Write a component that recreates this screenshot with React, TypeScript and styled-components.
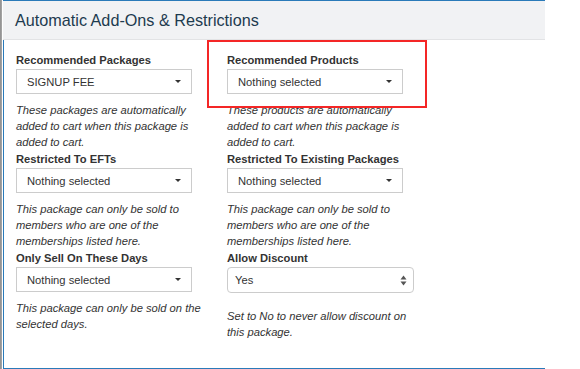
import styled, { createGlobalStyle } from "styled-components"

const GlobalStyle = createGlobalStyle`
  html, body {
    margin: 0;
    padding: 0;
    background: #fff;
  }
  body {
    font-family: "Liberation Sans", Arial, Helvetica, sans-serif;
    color: #333;
  }
`

const Page = styled.div`
  display: flex;
  width: 580px;
  height: 369px;
  overflow: hidden;
  background: #fff;
`

const WindowEdge = styled.div`
  width: 2px;
  flex: none;
  background: linear-gradient(to right, #8e8e8e, #a9a9a9);
`

const Panel = styled.section`
  position: relative;
  width: 542px;
  margin-left: 1px;
  display: flex;
  flex-direction: column;
  border-top: 1px solid #2a7ab9;
`

const Header = styled.header`
  height: 38px;
  display: flex;
  align-items: center;
  padding: 0 12px;
  background: #f1f2f4;
  border-bottom: 1px solid #e2e3e5;
`

const Title = styled.h3`
  margin: 0;
  font-size: 16.2px;
  font-weight: 400;
  color: #1d3b4f;
`

const Body = styled.div`
  flex: 1;
  padding: 12px 12px 0 12px;
  border-left: 1px solid #2a7ab9;
  border-bottom: 1px solid #2a7ab9;
`

const FieldGrid = styled.div`
  display: grid;
  grid-template-columns: 187px 187px;
  column-gap: 24px;
`

const FormGroup = styled.div`
  display: flex;
  flex-direction: column;
  align-items: flex-start;
`

const Label = styled.label`
  font-size: 11.2px;
  line-height: 16px;
  font-weight: 700;
  color: #333;
  margin-bottom: 1px;
`

const PickerButton = styled.div`
  box-sizing: border-box;
  width: 176px;
  height: 25px;
  display: flex;
  align-items: center;
  justify-content: space-between;
  padding: 0 10px;
  border: 1px solid #cccccc;
  background: #fff;
  font-size: 11.2px;
  color: #333;
`

const Caret = styled.span`
  width: 0;
  height: 0;
  margin-right: 0;
  border-top: 3px solid #333;
  border-left: 3px solid transparent;
  border-right: 3px solid transparent;
`

const NativeSelect = styled.div`
  box-sizing: border-box;
  width: 187px;
  height: 26px;
  display: flex;
  align-items: center;
  justify-content: space-between;
  padding: 0 6px 0 7px;
  border: 1px solid #cccccc;
  border-radius: 4px;
  background: #fff;
  font-size: 11.2px;
  color: #333;
`

const Help = styled.p<{ $gap?: number }>`
  margin: ${({ $gap }) => $gap ?? 8}px 0 1px 0;
  font-size: 11.2px;
  line-height: 16px;
  font-style: italic;
  color: #333;
`

const Highlight = styled.div`
  position: absolute;
  left: 204px;
  top: 39px;
  width: 220px;
  height: 68px;
  box-sizing: border-box;
  border: 2px solid #f42626;
  pointer-events: none;
`

const UpDownArrows = () => (
  <svg width="7" height="11" viewBox="0 0 7 11">
    <path d="M0.5 4.5 L3.5 0.5 L6.5 4.5 Z" fill="#555" />
    <path d="M0.5 6.5 L3.5 10.5 L6.5 6.5 Z" fill="#555" />
  </svg>
)

interface PickerFieldProps {
  label: string
  value: string
  help: string
}

const PickerField = ({ label, value, help }: PickerFieldProps) => (
  <FormGroup>
    <Label>{label}</Label>
    <PickerButton>
      <span>{value}</span>
      <Caret />
    </PickerButton>
    <Help>{help}</Help>
  </FormGroup>
)

const App = () => (
  <>
    <GlobalStyle />
    <Page>
      <WindowEdge />
      <Panel>
        <Header>
          <Title>Automatic Add-Ons &amp; Restrictions</Title>
        </Header>
        <Body>
          <FieldGrid>
            <PickerField
              label="Recommended Packages"
              value="SIGNUP FEE"
              help="These packages are automatically added to cart when this package is added to cart."
            />
            <PickerField
              label="Recommended Products"
              value="Nothing selected"
              help="These products are automatically added to cart when this package is added to cart."
            />
            <PickerField
              label="Restricted To EFTs"
              value="Nothing selected"
              help="This package can only be sold to members who are one of the memberships listed here."
            />
            <PickerField
              label="Restricted To Existing Packages"
              value="Nothing selected"
              help="This package can only be sold to members who are one of the memberships listed here."
            />
            <PickerField
              label="Only Sell On These Days"
              value="Nothing selected"
              help="This package can only be sold on the selected days."
            />
            <FormGroup>
              <Label>Allow Discount</Label>
              <NativeSelect>
                <span>Yes</span>
                <UpDownArrows />
              </NativeSelect>
              <Help $gap={15}>Set to No to never allow discount on this package.</Help>
            </FormGroup>
          </FieldGrid>
        </Body>
        <Highlight />
      </Panel>
    </Page>
  </>
)

export default App
